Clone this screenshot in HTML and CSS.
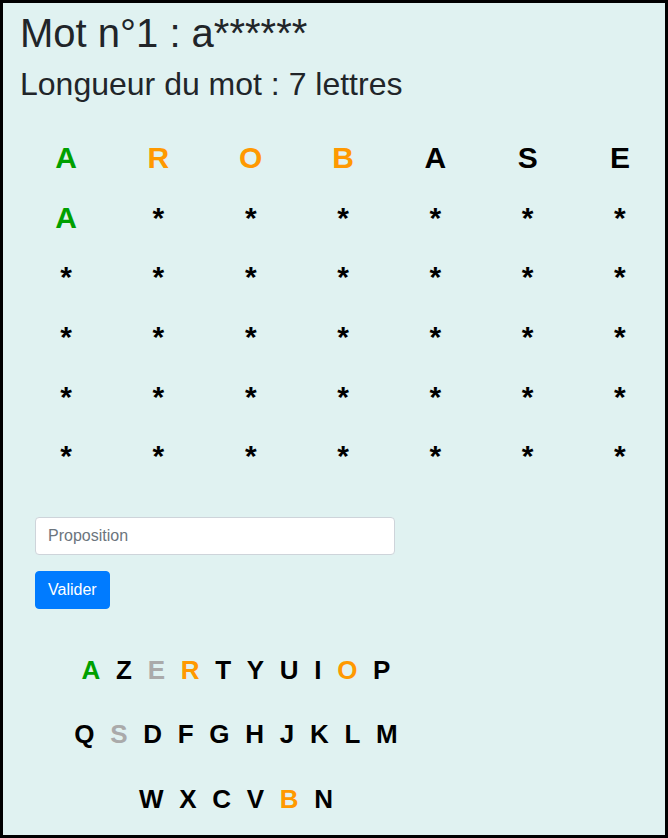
FILE: index.html
```html
<!DOCTYPE html>
<html lang="fr">
<head>
<meta charset="utf-8">
<title>Mot n°1</title>
<link rel="stylesheet" href="styles.css">
</head>
<body>
<main class="page">
  <h1 class="title">Mot n°1 : a******</h1>
  <h2 class="subtitle">Longueur du mot : 7 lettres</h2>

  <div class="board">
    <span class="cell good">A</span><span class="cell near">R</span><span class="cell near">O</span><span class="cell near">B</span><span class="cell">A</span><span class="cell">S</span><span class="cell">E</span>
    <span class="cell good">A</span><span class="cell">*</span><span class="cell">*</span><span class="cell">*</span><span class="cell">*</span><span class="cell">*</span><span class="cell">*</span>
    <span class="cell">*</span><span class="cell">*</span><span class="cell">*</span><span class="cell">*</span><span class="cell">*</span><span class="cell">*</span><span class="cell">*</span>
    <span class="cell">*</span><span class="cell">*</span><span class="cell">*</span><span class="cell">*</span><span class="cell">*</span><span class="cell">*</span><span class="cell">*</span>
    <span class="cell">*</span><span class="cell">*</span><span class="cell">*</span><span class="cell">*</span><span class="cell">*</span><span class="cell">*</span><span class="cell">*</span>
    <span class="cell">*</span><span class="cell">*</span><span class="cell">*</span><span class="cell">*</span><span class="cell">*</span><span class="cell">*</span><span class="cell">*</span>
  </div>

  <form class="guess">
    <input class="guess-input" type="text" placeholder="Proposition" autofocus>
    <button class="guess-btn" type="button">Valider</button>
  </form>

  <div class="keyboard">
    <div class="krow"><span class="key good">A</span><span class="key">Z</span><span class="key used">E</span><span class="key near">R</span><span class="key">T</span><span class="key">Y</span><span class="key">U</span><span class="key">I</span><span class="key near">O</span><span class="key">P</span></div>
    <div class="krow"><span class="key">Q</span><span class="key used">S</span><span class="key">D</span><span class="key">F</span><span class="key">G</span><span class="key">H</span><span class="key">J</span><span class="key">K</span><span class="key">L</span><span class="key">M</span></div>
    <div class="krow"><span class="key">W</span><span class="key">X</span><span class="key">C</span><span class="key">V</span><span class="key near">B</span><span class="key">N</span></div>
  </div>
</main>
</body>
</html>
```

FILE: styles.css
```css
* { box-sizing: border-box; }

html, body {
  margin: 0;
  height: 100%;
}

body {
  border: 3px solid #000;
  background: #e0f2f1;
  font-family: "Liberation Sans", Arial, sans-serif;
  color: #212529;
  overflow: hidden;
}

.page {
  padding: 6px 15px 0 17px;
}

.title {
  margin: 0 0 8px 0;
  font-size: 40px;
  font-weight: 400;
  line-height: 48px;
}

.subtitle {
  margin: 0;
  font-size: 32px;
  font-weight: 400;
  line-height: 38.4px;
}

.board {
  display: grid;
  grid-template-columns: repeat(7, 92.3px);
  grid-auto-rows: 59.7px;
  margin: 24.6px 0 0 0;
  width: 646px;
  font-size: 30px;
  font-weight: 700;
  line-height: 59.7px;
  color: #000;
}

.cell {
  text-align: center;
}

.good { color: #00a000; }
.near { color: #ff9900; }
.used { color: #aaaaaa; }

.guess {
  display: flex;
  flex-direction: column;
  align-items: flex-start;
  gap: 16px;
  margin: 30.8px 0 0 15px;
}

.guess-input {
  width: 360px;
  height: 38px;
  padding: 6px 12px;
  border: 1px solid #ced4da;
  border-radius: 4px;
  background: #fff;
  font-family: "Liberation Sans", Arial, sans-serif;
  font-size: 16px;
  color: #495057;
  outline: none;
}

.guess-input::placeholder {
  color: #6c757d;
}

.guess-btn {
  height: 38px;
  padding: 6px 12px;
  border: 1px solid #007bff;
  border-radius: 4px;
  background: #007bff;
  color: #fff;
  font-family: "Liberation Sans", Arial, sans-serif;
  font-size: 16px;
  line-height: 24px;
}

.keyboard {
  width: 432px;
  margin-top: 29px;
  font-size: 26px;
  font-weight: 700;
  color: #000;
}

.krow {
  display: flex;
  justify-content: center;
  gap: 15.7px;
  line-height: 64.5px;
}
```
